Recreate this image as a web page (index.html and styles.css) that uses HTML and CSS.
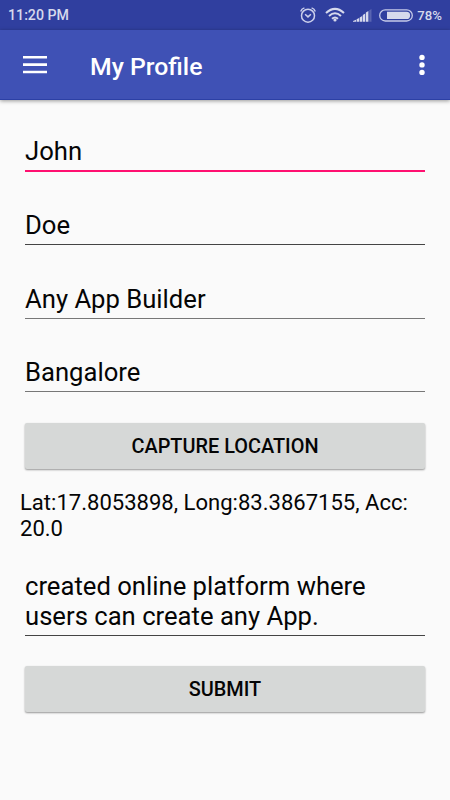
FILE: index.html
```html
<!DOCTYPE html>
<html lang="en">
<head>
    <meta charset="UTF-8">
    <title>My Profile</title>
    <link rel="stylesheet" href="styles.css">
</head>
<body>
<div class="status-bar">
    <span class="time">11:20 PM</span>
    <div class="status-icons">
        <svg class="alarm" width="16" height="16" viewBox="0 0 16 16">
            <circle cx="8" cy="8.7" r="6.5"/>
            <path d="M5.1 7.2L8 9.9L10.9 7.2M.7 4.4Q1.6 1.7 4.4 .9M11.6 .9Q14.4 1.7 15.3 4.4"/>
        </svg>
        <svg class="wifi" width="20" height="16" viewBox="0 0 20 16">
            <path d="M1 6Q10 -2.2 19 6M4 9Q10 3.6 16 9M7 11.8Q10 9.2 13 11.8"/>
            <circle cx="10" cy="13" r="1.6"/>
        </svg>
        <svg class="signal" width="19" height="13" viewBox="0 0 19 13">
            <path d="M0 12.8V12L3 10.7V12.8ZM3.6 10.3L6.1 9.1V12.8H3.6ZM6.7 8.4L9.2 7V12.8H6.7ZM9.8 6L12.2 4.6V12.8H9.8ZM12.9 3.5L15.4 1.9V12.8H12.9Z"/>
            <path class="off" d="M16.3 1.2L18.5 0V12.8H16.3Z"/>
        </svg>
        <svg class="battery" width="34" height="13" viewBox="0 0 34 13">
            <rect class="shell" x=".7" y=".8" width="32.6" height="11.2" rx="5.6"/>
            <path d="M8 2.8H27.5A3.6 3.6 0 0 1 27.5 10H8Z"/>
        </svg>
        <span class="percent">78%</span>
    </div>
</div>
<div class="toolbar">
    <svg class="menu" width="24" height="18" viewBox="0 0 24 18">
        <path d="M0 1.2H24M0 8.6H24M0 16H24"/>
    </svg>
    <h1 class="title">My Profile</h1>
    <svg class="more" width="6" height="22" viewBox="0 0 6 22">
        <circle cx="3" cy="3.4" r="2.7"/>
        <circle cx="3" cy="10.9" r="2.7"/>
        <circle cx="3" cy="18.4" r="2.7"/>
    </svg>
</div>
<div class="form">
    <div class="field focused">John</div>
    <div class="field">Doe</div>
    <div class="field soft">Any App Builder</div>
    <div class="field soft last">Bangalore</div>
    <button class="button" type="button">CAPTURE LOCATION</button>
    <p class="location">Lat:17.8053898, Long:83.3867155, Acc:<br>20.0</p>
    <div class="field about">created online platform where<br>users can create any App.</div>
    <button class="button" type="button">SUBMIT</button>
</div>
</body>
</html>
```
FILE: styles.css
```css
body {
    margin: 0;
    min-height: 800px;
    background-color: #fafafa;
    color: #050505;
    font-family: Roboto, sans-serif;
}

/* Status bar */
.status-bar {
    display: flex;
    justify-content: space-between;
    align-items: center;
    box-sizing: border-box;
    height: 30px;
    padding: 0 8px;
    background-color: #303f9f;
    color: #d6d9ec;
}

.time {
    font-size: 14.2px;
    font-weight: 500;
    line-height: 30px;
}

.status-icons {
    display: flex;
    align-items: center;
}

.alarm {
    margin-right: 9px;
    fill: none;
    stroke: #ccd0ec;
    stroke-width: 1.5;
}

.wifi {
    margin-right: 8px;
    fill: none;
    stroke: #d6d9ec;
    stroke-width: 2;
}

.wifi circle {
    fill: #d6d9ec;
    stroke: none;
}

.signal {
    margin: 0 7px 0 0;
    fill: #d6d9ec;
}

.signal .off {
    fill: #5965b2;
}

.battery {
    margin-right: 4px;
    fill: #d6d9ec;
}

.battery .shell {
    fill: none;
    stroke: #c5cae9;
    stroke-width: 1.3;
}

.percent {
    padding-top: 1px;
    font-size: 13.2px;
    font-weight: 500;
    line-height: 30px;
}

/* Toolbar */
.toolbar {
    display: flex;
    align-items: center;
    box-sizing: border-box;
    height: 70px;
    padding: 0 25px 0 23px;
    background-color: #3f51b5;
    border-bottom: 1px solid #2c40a5;
    box-shadow: 0 1px 4px rgba(0, 0, 0, 0.4);
}

.menu {
    stroke: #fff;
    stroke-width: 2.7;
}

.title {
    flex: 1;
    margin: 4px 0 0 43px;
    color: #fff;
    font-size: 24.8px;
    font-weight: 500;
    line-height: 30px;
}

.more {
    fill: #fff;
}

/* Form */
.form {
    padding: 36px 25px 0;
}

.field {
    height: 34px;
    margin-bottom: 38.6px;
    border-bottom: 1px solid #444;
    font-size: 25.65px;
    line-height: 30px;
}

.focused {
    margin-bottom: 38px;
    border-bottom: 2px solid #ff1070;
}

.soft {
    border-bottom-color: #777;
}

.last {
    margin-bottom: 30.5px;
}

.about {
    height: 64px;
    margin-bottom: 30px;
}

.button {
    display: block;
    width: 100%;
    height: 46px;
    padding: 2px 0 0;
    border: 0;
    border-radius: 2px;
    background-color: #d6d8d7;
    box-shadow: 0 1px 2px rgba(0, 0, 0, 0.4);
    color: #050505;
    font-family: Roboto, sans-serif;
    font-size: 19.9px;
    font-weight: 500;
}

.location {
    margin: 21.5px -5px 28.8px;
    font-size: 22.05px;
    line-height: 26px;
}
```
